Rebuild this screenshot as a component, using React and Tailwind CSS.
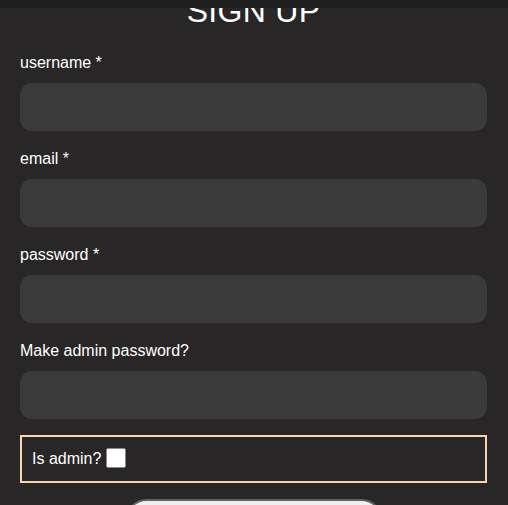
export default function App() {
  const fields = [
    { label: "username *", type: "text" },
    { label: "email *", type: "email" },
    { label: "password *", type: "password" },
    { label: "Make admin password?", type: "password" },
  ];
  return (
    <div
      className="relative min-h-[505px] w-full overflow-hidden bg-[#282627] text-white"
      style={{ fontFamily: '"Liberation Sans", Arial, sans-serif' }}
    >
      <div className="absolute left-0 top-0 z-10 h-2 w-full bg-[#1e1e1e]" />
      <div className="mt-[-7px] flex flex-col pl-5 pr-[21px]">
        <h1 className="text-center text-[32px] font-normal leading-[37px] tracking-[0.3px]">SIGN UP</h1>
        <div className="mt-6 flex flex-col gap-[19px]">
          {fields.map((f) => (
            <div key={f.label} className="flex flex-col">
              <label className="mb-[11px] text-[16px] leading-[18px]">{f.label}</label>
              <input
                type={f.type}
                className="h-12 w-full rounded-xl bg-[#3c3b3c] px-3 text-white outline-none"
              />
            </div>
          ))}
        </div>
        <div className="mt-4 flex h-12 items-center border-2 border-[#fcd5ab] pl-[10px]">
          <span className="text-[16px] leading-[18px]">Is admin?</span>
          <span className="ml-[5px] mt-[-2px] block h-5 w-5 rounded-[2px] border border-[#8a8a8a] bg-white" />
        </div>
        <div className="mt-4 flex justify-center">
          <button className="h-11 w-[258px] rounded-full border-2 border-[#626262] bg-[#efefef] text-[16px] text-black">
            Sign up
          </button>
        </div>
      </div>
    </div>
  );
}
